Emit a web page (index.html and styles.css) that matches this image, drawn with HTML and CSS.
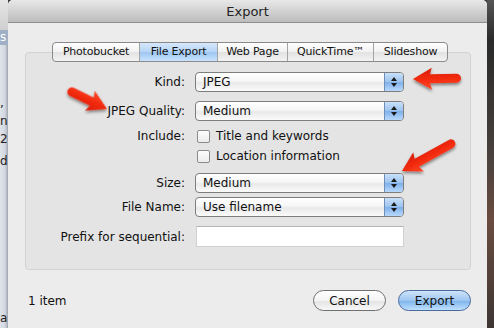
FILE: index.html
```html
<!DOCTYPE html>
<html lang="en">
<head>
  <meta charset="UTF-8">
  <title>Export</title>
  <link rel="stylesheet" href="styles.css">
</head>
<body>
  <div class="screen">
    <!-- app behind the sheet -->
    <div class="behind-left">
      <div class="bl-bar"></div>
      <div class="bl-band">s</div>
      <div class="bl-text">
        <span class="f1">,</span>
        <span class="f2">n</span>
        <span class="f3">2</span>
        <span class="f4">d</span>
        <span class="f5">a</span>
      </div>
    </div>

    <div class="dialog">
      <div class="titlebar">Export</div>
      <div class="content">
        <div class="tabs">
          <div class="tab">Photobucket</div>
          <div class="tab active">File Export</div>
          <div class="tab">Web Page</div>
          <div class="tab">QuickTime™</div>
          <div class="tab">Slideshow</div>
        </div>

        <div class="group">
          <div class="row">
            <label class="lbl">Kind:</label>
            <div class="popup"><span>JPEG</span><i class="stepper"></i></div>
          </div>

          <div class="row row-quality">
            <label class="lbl">JPEG Quality:</label>
            <div class="popup"><span>Medium</span><i class="stepper"></i></div>
          </div>

          <div class="row row-include">
            <label class="lbl">Include:</label>
            <div class="checks">
              <div class="check"><b></b>Title and keywords</div>
              <div class="check"><b></b>Location information</div>
            </div>
          </div>

          <div class="row row-size">
            <label class="lbl">Size:</label>
            <div class="popup"><span>Medium</span><i class="stepper"></i></div>
          </div>

          <div class="row row-name">
            <label class="lbl">File Name:</label>
            <div class="popup"><span>Use filename</span><i class="stepper"></i></div>
          </div>

          <div class="row row-prefix">
            <label class="lbl">Prefix for sequential:</label>
            <div class="field"></div>
          </div>
        </div>

        <div class="footer">
          <span class="count">1 item</span>
          <div class="buttons">
            <button class="btn">Cancel</button>
            <button class="btn default">Export</button>
          </div>
        </div>
      </div>
    </div>

    <div class="behind-right"></div>

    <!-- annotation arrows drawn over the screenshot -->
    <svg class="arrows" width="494" height="328" viewBox="0 0 494 328">
      <defs>
        <linearGradient id="red" x1="0" y1="0" x2="0" y2="1">
          <stop offset="0" stop-color="#ff4a2a"/>
          <stop offset="0.5" stop-color="#f22a0e"/>
          <stop offset="1" stop-color="#d81c06"/>
        </linearGradient>
        <filter id="shadow" x="-30%" y="-40%" width="160%" height="180%">
          <feDropShadow dx="0" dy="2" stdDeviation="1.5" flood-color="#000" flood-opacity="0.45"/>
        </filter>
      </defs>
      <g fill="url(#red)" filter="url(#shadow)">
        <path transform="translate(413 79) rotate(179)" d="M0 0 L-19 -11 Q-17.5 -7 -17 -4.5 L-43.5 -4.5 A4.5 4.5 0 0 0 -43.5 4.5 L-17 4.5 Q-17.5 7 -19 11 Z"/>
        <path transform="translate(107 109) rotate(26)" d="M0 0 L-19 -11 Q-17.5 -7 -17 -4.5 L-39 -4.5 A4.5 4.5 0 0 0 -39 4.5 L-17 4.5 Q-17.5 7 -19 11 Z"/>
        <path transform="translate(402 171) rotate(151)" d="M0 0 L-19 -11 Q-17.5 -7 -17 -4.5 L-56 -4.5 A4.5 4.5 0 0 0 -56 4.5 L-17 4.5 Q-17.5 7 -19 11 Z"/>
      </g>
    </svg>
  </div>
</body>
</html>
```

FILE: styles.css
```css
body {
  margin: 0;
  font-family: "DejaVu Sans", "Liberation Sans", sans-serif;
  font-size: 12px;
  color: #111;
}

.screen {
  position: relative;
  width: 494px;
  height: 328px;
  display: flex;
  overflow: hidden;
  background: #3a3a3a;
}

/* ---------- background app ---------- */

.behind-left {
  width: 8px;
  flex: none;
  background: linear-gradient(to right, #dfe3ea 0, #d3d8e0 5px, #9ca3ad 8px);
  overflow: hidden;
  font-size: 12px;
  color: #222;
}

.bl-bar {
  height: 30px;
  background: linear-gradient(to bottom, #e6e6e6, #cfcfcf);
}

.bl-band {
  height: 15px;
  line-height: 14px;
  background: #9fb0c6;
  color: #fff;
}

.bl-text {
  display: flex;
  flex-direction: column;
  line-height: 18px;
}

.f1 { margin-top: 49px; }
.f4 { margin-top: 4px; }
.f5 {
  margin-top: 140px;
  line-height: 16px;
}

.behind-right {
  width: 7px;
  flex: none;
  background: linear-gradient(to bottom, #555 0, #2a2a2a 40px, #46403c 150px, #6a4c40 220px, #3d3532 328px);
}

/* ---------- sheet ---------- */

.dialog {
  width: 479px;
  flex: none;
  background: #ececec;
  border-radius: 5px 5px 0 0;
  display: flex;
  flex-direction: column;
}

.titlebar {
  height: 22px;
  line-height: 23px;
  text-align: center;
  font-size: 13px;
  color: #222;
  background: linear-gradient(to bottom, #e8e8e8, #bcbcbc);
  border-bottom: 1px solid #8e8e8e;
  border-radius: 5px 5px 0 0;
  flex: none;
}

.content {
  padding: 19px 16px 0 17px;
}

.tabs {
  position: relative;
  z-index: 2;
  display: flex;
  margin-left: 27px;
  width: max-content;
  height: 18px;
  border: 1px solid #8a8a8a;
  border-radius: 4px;
  background: linear-gradient(to bottom, #ffffff, #f1f1f1 50%, #e2e2e2 51%, #f3f3f3);
  overflow: hidden;
  font-size: 11px;
  letter-spacing: -0.2px;
}

.tab {
  line-height: 18px;
  text-align: center;
  border-left: 1px solid #a4a4a4;
}

.tab:first-child { border-left: 0; width: 86px; }
.tab:nth-child(2) { width: 77px; }
.tab:nth-child(3) { width: 69px; }
.tab:nth-child(4) { width: 85px; }
.tab:nth-child(5) { width: 73px; }

.tab.active {
  background: linear-gradient(to bottom, #d6e8fb, #b5d4f6 50%, #9cc6f2 51%, #c9e3fd);
}

.group {
  margin-top: -10px;
  height: 197px;
  border: 1px solid #d2d2d2;
  border-radius: 4px;
  background: #e4e4e4;
  padding-top: 19px;
}

/* ---------- form rows ---------- */

.row {
  display: flex;
  align-items: center;
  gap: 10px;
}

.lbl {
  width: 159px;
  flex: none;
  text-align: right;
  line-height: 20px;
}

.row-quality { margin-top: 9px; }

.row-include {
  margin-top: 5px;
  align-items: flex-start;
}

.row-size { margin-top: 7px; }
.row-name { margin-top: 4px; }
.row-prefix { margin-top: 9px; }

.popup {
  width: 207px;
  height: 18px;
  border: 1px solid #7d7d7d;
  border-radius: 4px;
  background: linear-gradient(to bottom, #ffffff, #f6f6f6 45%, #e9e9e9 55%, #fbfbfb);
  display: flex;
  align-items: center;
  overflow: hidden;
}

.popup span {
  flex: 1;
  padding-left: 7px;
}

.stepper {
  width: 18px;
  height: 18px;
  border-left: 1px solid #6f8fba;
  background: linear-gradient(to bottom, #c8e0fa, #9cc3ee 50%, #7eb0ea 51%, #b8d8fb);
  position: relative;
}

.stepper::before,
.stepper::after {
  content: "";
  position: absolute;
  left: 6px;
  border-left: 3px solid transparent;
  border-right: 3px solid transparent;
}

.stepper::before {
  top: 4px;
  border-bottom: 4px solid #1b1b1b;
}

.stepper::after {
  top: 10px;
  border-top: 4px solid #1b1b1b;
}

.checks {
  display: flex;
  flex-direction: column;
}

.check {
  display: flex;
  align-items: center;
  height: 20px;
}

.check b {
  width: 11px;
  height: 11px;
  border: 1px solid #8b8b8b;
  border-radius: 2px;
  background: linear-gradient(to bottom, #fdfdfd, #ececec);
  margin: 0 6px 0 2px;
}

.field {
  width: 206px;
  height: 19px;
  border: 1px solid #d0d0d0;
  border-top-color: #b4b4b4;
  background: #fff;
  margin-left: 1px;
}

/* ---------- footer ---------- */

.footer {
  display: flex;
  align-items: center;
  justify-content: space-between;
  margin-top: 20px;
  padding-left: 3px;
}

.buttons {
  display: flex;
  gap: 12px;
}

.btn {
  font-family: inherit;
  font-size: 12px;
  color: #111;
  height: 21px;
  width: 73px;
  border: 1px solid #6f6f6f;
  border-radius: 11px;
  background: linear-gradient(to bottom, #ffffff, #f4f4f4 50%, #e3e3e3 51%, #f7f7f7);
  padding: 0;
}

.btn.default {
  border-color: #4a6a9c;
  background: linear-gradient(to bottom, #cfe4fb, #9cc6f0 50%, #7cb2ec 51%, #bfe0ff);
}

.arrows {
  position: absolute;
  left: 0;
  top: 0;
  pointer-events: none;
}
```
